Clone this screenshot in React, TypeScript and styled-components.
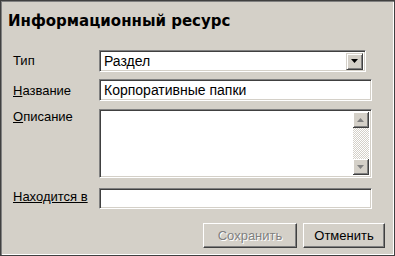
import React from "react";
import styled, { createGlobalStyle } from "styled-components";

const Global = createGlobalStyle`
  html, body { margin: 0; padding: 0; background: #d4d0c8; }
  * { box-sizing: border-box; }
`;

const Frame = styled.div`
  width: 395px;
  height: 256px;
  background: #d4d0c8;
  border: 1px solid #404040;
  box-shadow: inset 1px 1px 0 #808080, inset -1px -1px 0 #ffffff;
  display: flex;
  flex-direction: column;
  font-family: "Liberation Sans", Arial, sans-serif;
  color: #000;
`;

const Title = styled.h1`
  margin: 0;
  padding: 11px 0 0 7px;
  height: 35px;
  font-family: "DejaVu Sans", Verdana, sans-serif;
  font-size: 15px;
  font-weight: bold;
  line-height: 18px;
`;

const Form = styled.div`
  display: grid;
  grid-template-columns: 86px 273px;
  padding: 14px 0 0 12px;
  row-gap: 8px;
`;

const Label = styled.label<{ $full?: boolean; $top?: number }>`
  font-size: 13px;
  line-height: 15px;
  padding-top: ${(p) => p.$top ?? 3}px;
  text-decoration: ${(p) => (p.$full ? "underline" : "none")};
  u { text-decoration: underline; }
`;

const Sunken = styled.div<{ $h: number; $w?: number; $gap?: number }>`
  height: ${(p) => p.$h}px;
  width: ${(p) => (p.$w ? `${p.$w}px` : "100%")};
  margin-top: ${(p) => p.$gap ?? 0}px;
  background: #fff;
  border-top: 1px solid #808080;
  border-left: 1px solid #808080;
  border-right: 1px solid #ffffff;
  border-bottom: 1px solid #ffffff;
  box-shadow: inset 1px 1px 0 #404040, inset -1px -1px 0 #d4d0c8;
  display: flex;
  align-items: center;
  font-size: 14px;
  padding-left: 4px;
`;

const Value = styled.span`
  flex: 1;
`;

const ArrowButton = styled.div`
  width: 17px;
  height: 17px;
  margin-right: 2px;
  background: #d4d0c8;
  border-top: 1px solid #d4d0c8;
  border-left: 1px solid #d4d0c8;
  border-right: 1px solid #404040;
  border-bottom: 1px solid #404040;
  box-shadow: inset 1px 1px 0 #ffffff, inset -1px -1px 0 #808080;
  display: flex;
  align-items: center;
  justify-content: center;
`;

const Scrollbar = styled.div`
  align-self: stretch;
  width: 16px;
  margin: 2px 2px 2px auto;
  display: flex;
  flex-direction: column;
  justify-content: space-between;
  background-color: #eae8e3;
  background-image: repeating-conic-gradient(#ffffff 0 25%, #d4d0c8 0 50%);
  background-size: 2px 2px;
`;

const ScrollButton = styled.div`
  width: 16px;
  height: 16px;
  background: #d4d0c8;
  border-right: 1px solid #404040;
  border-bottom: 1px solid #404040;
  box-shadow: inset 1px 1px 0 #ffffff, inset -1px -1px 0 #808080;
  display: flex;
  align-items: center;
  justify-content: center;
`;

const Footer = styled.div`
  display: flex;
  justify-content: flex-end;
  gap: 6px;
  padding: 14px 9px 0 0;
`;

const Button = styled.button<{ $w: number; $disabled?: boolean }>`
  width: ${(p) => p.$w}px;
  height: 25px;
  padding: 0;
  background: #d4d0c8;
  font-family: "Liberation Sans", Arial, sans-serif;
  font-size: 13px;
  color: ${(p) => (p.$disabled ? "#808080" : "#000")};
  text-shadow: ${(p) => (p.$disabled ? "1px 1px 0 #ffffff" : "none")};
  border-top: 1px solid #ffffff;
  border-left: 1px solid #ffffff;
  border-right: 1px solid #404040;
  border-bottom: 1px solid #404040;
  box-shadow: inset -1px -1px 0 #808080;
`;

const Down = ({ color = "#000" }: { color?: string }) => (
  <svg width="7" height="4" viewBox="0 0 7 4">
    <path d="M0 0h7L3.5 4z" fill={color} />
  </svg>
);

const Up = ({ color = "#808080" }: { color?: string }) => (
  <svg width="7" height="4" viewBox="0 0 7 4">
    <path d="M0 4h7L3.5 0z" fill={color} />
  </svg>
);

export default function App() {
  return (
    <>
      <Global />
      <Frame>
        <Title>Информационный ресурс</Title>
        <Form>
          <Label>Тип</Label>
          <Sunken $h={22} $w={267}>
            <Value>Раздел</Value>
            <ArrowButton>
              <Down />
            </ArrowButton>
          </Sunken>

          <Label>
            <u>Н</u>азвание
          </Label>
          <Sunken $h={22} $gap={-1}>
            <Value>Корпоративные папки</Value>
          </Sunken>

          <Label $top={-2}>
            <u>О</u>писание
          </Label>
          <Sunken $h={69}>
            <Scrollbar>
              <ScrollButton>
                <Up />
              </ScrollButton>
              <ScrollButton>
                <Down color="#808080" />
              </ScrollButton>
            </Scrollbar>
          </Sunken>

          <Label $full>Находится в</Label>
          <Sunken $h={21} $gap={2} />
        </Form>
        <Footer>
          <Button $w={94} $disabled>
            Сохранить
          </Button>
          <Button $w={82}>Отменить</Button>
        </Footer>
      </Frame>
    </>
  );
}
